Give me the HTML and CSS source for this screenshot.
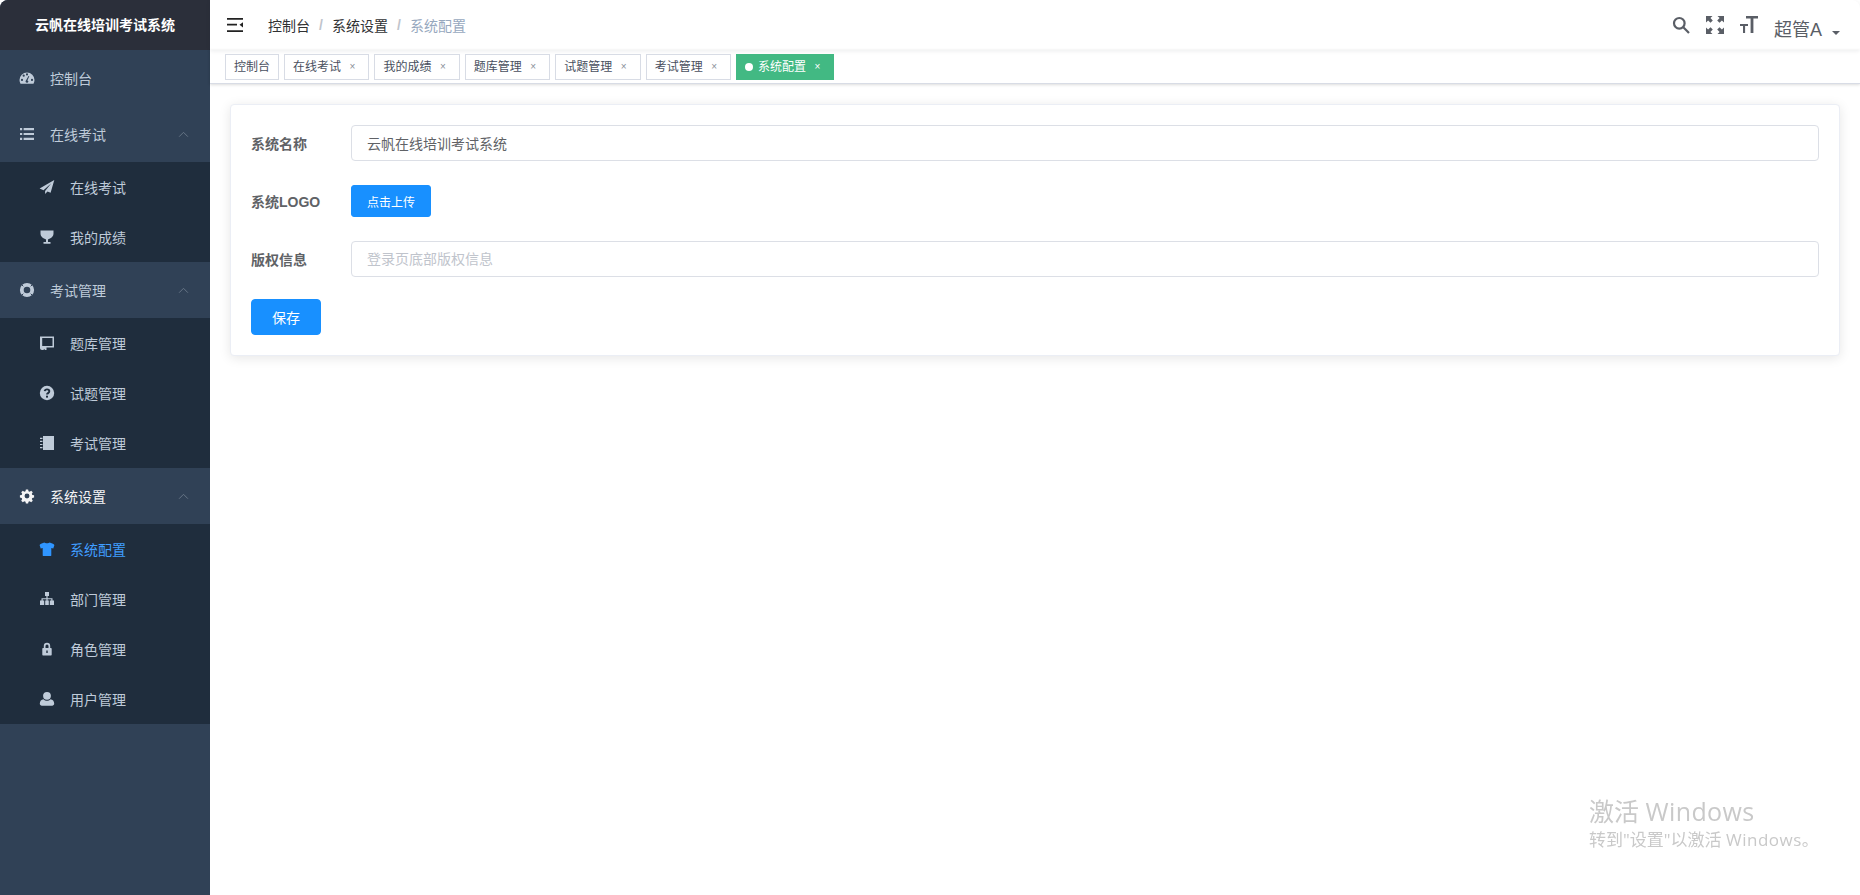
FILE: index.html
```html
<!DOCTYPE html>
<html lang="zh">
<head>
<meta charset="utf-8">
<title>系统配置</title>
<link rel="stylesheet" href="styles.css">
</head>
<body>
<div class="app">
  <aside class="sidebar">
    <div class="logo">云帆在线培训考试系统</div>
    <nav>
      <a class="group"><svg class="ico" viewBox="0 0 16 16"><path fill-rule="evenodd" d="M8 2.500A7.500 7.500 0 0 0 .5 10c0 1.200.3 2.400.9 3.400.1.200.3.300.5.300h12.200c.2 0 .4-.1.500-.3.600-1 .9-2.200.9-3.400A7.500 7.500 0 0 0 8 2.500zM3 11a1.100 1.100 0 1 1 0-2.200A1.100 1.100 0 0 1 3 11zM4.700 6.800a1.100 1.100 0 1 1 0-2.200 1.100 1.100 0 0 1 0 2.200zM8 5.500a1.100 1.100 0 1 1 0-2.200 1.100 1.100 0 0 1 0 2.200zM13 11a1.100 1.100 0 1 1 0-2.200 1.100 1.100 0 0 1 0 2.200zM9.400 11.800a1.500 1.500 0 0 1-2.900-.5l3-5.400.8.400-1.900 4.100a1.500 1.500 0 0 1 1 1.400z"/></svg><span>控制台</span></a>

      <a class="group"><svg class="ico" viewBox="0 0 16 16"><path d="M1 2h2.200v2.200H1zM1 6.900h2.200v2.200H1zM1 11.800h2.200V14H1zM4.600 2H15v2.200H4.600zM4.600 6.900H15v2.200H4.600zM4.600 11.800H15V14H4.600z"/></svg><span>在线考试</span><svg class="arrow" viewBox="0 0 12 8"><path d="M1 6.500l5-5 5 5"/></svg></a>
      <div class="sub">
        <a class="item"><svg class="ico" viewBox="0 0 16 16"><path d="M15.300 1L.6 9.500l3.900 1.700 7.800-6.900-6.200 7.700V15l2.400-2.600 3.100 1.300z"/></svg><span>在线考试</span></a>
        <a class="item"><svg class="ico" viewBox="0 0 16 16"><path d="M1.500 1.500h13v3c0 2.800-2.200 5-5 5.500-.3.300-.5.700-.5 1.200V13h2.500v1.800H4.500V13H7v-1.800c0-.5-.2-.9-.5-1.200C3.700 9.500 1.500 7.300 1.500 4.500z"/></svg><span>我的成绩</span></a>
      </div>

      <a class="group"><svg class="ico" viewBox="0 0 16 16"><circle class="ring" cx="8" cy="8" r="5.200"/><path class="cut" d="M2.600 2.600l1.700 1.700M13.400 2.600l-1.700 1.700M2.600 13.400l1.700-1.700M13.400 13.400l-1.700-1.700"/></svg><span>考试管理</span><svg class="arrow" viewBox="0 0 12 8"><path d="M1 6.500l5-5 5 5"/></svg></a>
      <div class="sub">
        <a class="item"><svg class="ico" viewBox="0 0 16 16"><path fill-rule="evenodd" d="M1 1.500h14v11H7.500V15H6l-.8-1-.8 1H3c-1.100 0-2-.9-2-2zM3.200 3v8h10.300V3z"/></svg><span>题库管理</span></a>
        <a class="item"><svg class="ico" viewBox="0 0 16 16"><circle cx="8" cy="8" r="7.200"/><path class="mark" d="M5.700 6.200C5.900 5 6.800 4.400 8 4.400c1.300 0 2.300.8 2.300 1.900 0 1.900-2.300 1.700-2.300 3.300"/><rect class="dot" x="7" y="10.700" width="2" height="1.900"/></svg><span>试题管理</span></a>
        <a class="item"><svg class="ico" viewBox="0 0 16 16"><path d="M4 1h11v14H4zM1 2.800h2.500V4H1zM1 5.800h2.500V7H1zM1 8.900h2.500v1.200H1zM1 12h2.500v1.200H1z"/></svg><span>考试管理</span></a>
      </div>

      <a class="group on"><svg class="ico" viewBox="0 0 16 16"><path fill-rule="evenodd" d="M6.700 1h2.600l.4 2 1.300.6 1.800-1.100 1.800 1.800-1.100 1.800.6 1.300 2 .4v2.600l-2 .4-.6 1.300 1.100 1.800-1.800 1.800-1.800-1.100-1.300.6-.4 2H6.700l-.4-2-1.300-.6-1.800 1.100-1.800-1.800 1.100-1.800-.6-1.300-2-.4V7.800l2-.4.6-1.300-1.100-1.800 1.800-1.800 1.800 1.100 1.300-.6zM8 5.700a2.800 2.800 0 1 0 0 5.600 2.800 2.800 0 0 0 0-5.600z" transform="translate(1 .5) scale(.875)"/></svg><span>系统设置</span><svg class="arrow" viewBox="0 0 12 8"><path d="M1 6.500l5-5 5 5"/></svg></a>
      <div class="sub">
        <a class="item active"><svg class="ico" viewBox="0 0 16 16"><path d="M5.300 1.500C6 2.600 10 2.600 10.700 1.500c1.700.4 3.600 1.300 4.700 2.400l-1.100 3.600-2-.6v7.600c0 .3-.2.500-.5.500H4.200c-.3 0-.5-.2-.5-.5V6.900l-2 .6L.6 3.900c1.100-1.100 3-2 4.700-2.400z"/></svg><span>系统配置</span></a>
        <a class="item"><svg class="ico" viewBox="0 0 16 16"><path d="M6 1h4v4H8.600v2.200h4.900v2.300H15V14h-4.200V9.500h1.500V8.300H8.600v1.200h1.200V14H6.200V9.500h1.200V8.300H3.700v1.200h1.500V14H1V9.500h1.500V7.200h4.900V5H6z"/></svg><span>部门管理</span></a>
        <a class="item"><svg class="ico" viewBox="0 0 16 16"><path fill-rule="evenodd" d="M4.800 7V5a3.200 3.200 0 0 1 6.400 0v2h.8c.4 0 .7.300.7.700v6c0 .4-.3.700-.7.700H4c-.4 0-.7-.3-.7-.7v-6c0-.4.300-.7.700-.7zM6.500 7h3V5a1.500 1.500 0 0 0-3 0zM7.300 9.500v2.400h1.400V9.500z"/></svg><span>角色管理</span></a>
        <a class="item"><svg class="ico" viewBox="0 0 16 16"><circle cx="8" cy="4.800" r="3.900"/><path d="M4.500 8.200C5.500 9.300 6.700 9.800 8 9.800s2.500-.5 3.500-1.600c2.200.2 3.700 1.800 3.700 4.400 0 1.300-.9 2.200-2 2.200H2.800c-1.100 0-2-.9-2-2.200 0-2.600 1.500-4.200 3.700-4.400z"/></svg><span>用户管理</span></a>
      </div>
    </nav>
  </aside>

  <main class="main">
    <header class="navbar">
      <svg class="hamburger" viewBox="0 0 16 14"><path d="M0 0h16v1.800H0zM0 5.800h10v1.800H0zM0 12.200h16V14H0zM16 4.200v5.200l-3.500-2.600z"/></svg>
      <div class="crumbs">
        <span>控制台</span><i>/</i><span>系统设置</span><i>/</i><span class="cur">系统配置</span>
      </div>
      <div class="right">
        <svg class="tool" viewBox="0 0 18 18"><circle cx="7.300" cy="7.300" r="5.300"/><path d="M11.300 11.300l5.700 5.700"/></svg>
        <svg class="tool solid" viewBox="0 0 18 18"><path d="M0 0h6.500L4.400 2.100l2.400 2.400-2.300 2.300-2.400-2.400L0 6.500zM18 0v6.500l-2.100-2.100-2.400 2.400-2.300-2.300 2.400-2.400L11.500 0zM0 18v-6.500l2.100 2.100 2.400-2.400 2.300 2.300-2.400 2.400L6.500 18zM18 18h-6.500l2.100-2.100-2.400-2.400 2.300-2.300 2.400 2.400 2.100-2.100z"/></svg>
        <svg class="tool solid" viewBox="0 0 18 18"><path d="M6 0h12v2.400h-4.600V17h-2.800V2.400H6zM0 8h8v2H5.100v7H3v-7H0z"/></svg>
        <div class="user">超管A</div>
        <span class="caret"></span>
      </div>
    </header>

    <div class="tags">
      <a class="tag">控制台</a>
      <a class="tag">在线考试<b>×</b></a>
      <a class="tag">我的成绩<b>×</b></a>
      <a class="tag">题库管理<b>×</b></a>
      <a class="tag">试题管理<b>×</b></a>
      <a class="tag">考试管理<b>×</b></a>
      <a class="tag current"><em></em>系统配置<b>×</b></a>
    </div>

    <section class="content">
      <form class="card">
        <div class="row">
          <label>系统名称</label>
          <input class="field" type="text" value="云帆在线培训考试系统">
        </div>
        <div class="row">
          <label>系统LOGO</label>
          <button class="btn small" type="button">点击上传</button>
        </div>
        <div class="row">
          <label>版权信息</label>
          <input class="field" type="text" placeholder="登录页底部版权信息">
        </div>
        <button class="btn save" type="button">保存</button>
      </form>
    </section>
  </main>
</div>
<div class="watermark">
  <div class="wm1">激活 <span class="latin">Windows</span></div>
  <div class="wm2">转到"设置"以激活 <span class="latin">Windows</span>。</div>
</div>
</body>
</html>
```

FILE: styles.css
```css
* { box-sizing: border-box; }
html, body { height: 100%; margin: 0; overflow: hidden; background: #fff; }
body { font-family: "Liberation Sans", "Noto Sans CJK SC", sans-serif; font-size: 14px; color: #303133; }
.app { display: flex; height: 100%; }

.sidebar { width: 210px; flex: none; background: #304156; border-top-left-radius: 8px; overflow: hidden; color: #bfcbd9; }
.logo { height: 50px; background: #2b2f3a; color: #fff; font-weight: 700; font-size: 14px; line-height: 50px; text-align: center; }
.group, .item { display: flex; align-items: center; color: #bfcbd9; fill: #bfcbd9; }
.group { height: 56px; padding-left: 19px; }
.item { height: 50px; padding-left: 39px; }
.sub { background: #1f2d3d; }
.ico { width: 16px; height: 16px; flex: none; margin-right: 15px; }
.ico .ring { fill: none; stroke: #bfcbd9; stroke-width: 3.800; }
.ico .cut { fill: none; stroke: #304156; stroke-width: 1; }
.ico .mark { fill: none; stroke: #1f2d3d; stroke-width: 1.900; }
.ico .dot { fill: #1f2d3d; }
.arrow { width: 11px; height: 7px; margin-left: auto; margin-right: 21px; fill: none; stroke: #6d7b8c; stroke-width: 1; }
.group.on { color: #f4f4f5; fill: #f4f4f5; }
.group.on .ring { stroke: #f4f4f5; }
.item.active { color: #409eff; fill: #2f95ff; }

.main { flex: 1; min-width: 0; display: flex; flex-direction: column; }
.navbar { height: 50px; flex: none; display: flex; align-items: center; padding-left: 17px; border-top-right-radius: 8px; box-shadow: 0 1px 4px rgba(0,21,41,.08); position: relative; }
.hamburger { width: 16px; height: 14px; fill: #222; margin-right: 25px; }
.crumbs { display: flex; align-items: center; color: #303133; }
.crumbs i { font-style: normal; color: #c0c4cc; font-weight: 700; margin: 0 9px; width: 4px; text-align: center; }
.crumbs .cur { color: #97a8be; }
.right { margin-left: auto; display: flex; align-items: center; color: #5a5e66; }
.tool { width: 18px; height: 18px; margin-right: 16px; fill: none; stroke: #5a5e66; stroke-width: 2.200; }
.tool.solid { fill: #5a5e66; stroke: none; }
.user { font-size: 18px; line-height: 24px; margin-top: 10px; }
.caret { width: 0; height: 0; border: 4px solid transparent; border-top: 4px solid #5a5e66; border-bottom: 0; margin: 16px 20px 0 10px; }

.tags { height: 34px; flex: none; display: flex; align-items: center; padding-left: 15px; gap: 5px; border-bottom: 1px solid #d8dce5; box-shadow: 0 1px 3px rgba(0,0,0,.12), 0 0 3px rgba(0,0,0,.04); position: relative; }
.tag { height: 26px; line-height: 24px; border: 1px solid #d8dce5; padding: 0 8px; font-size: 12px; color: #495060; display: flex; align-items: center; white-space: nowrap; }
.tag b { width: 16px; margin-left: 3.400px; text-align: center; font-weight: 400; font-size: 10px; color: #8a8f99; }
.tag.current { background: #42b983; border-color: #42b983; color: #fff; }
.tag.current b { color: #fff; }
.tag em { width: 8px; height: 8px; border-radius: 50%; background: #fff; margin-right: 5px; }

.content { flex: 1; padding: 20px; }
.card { background: #fff; border: 1px solid #ebeef5; border-radius: 4px; box-shadow: 0 2px 12px rgba(0,0,0,.1); padding: 20px; }
.row { display: flex; align-items: center; height: 36px; margin-bottom: 22px; }
.row label { width: 100px; flex: none; font-weight: 700; color: #606266; font-size: 14px; }
.field { flex: 1; height: 36px; border: 1px solid #dcdfe6; border-radius: 4px; padding: 0 15px; font: inherit; color: #606266; outline: none; }
.field::placeholder { color: #c0c4cc; opacity: 1; }
.btn { border: 1px solid #1890ff; background: #1890ff; color: #fff; font-family: inherit; padding: 0; display: block; }
.small { width: 80px; height: 32px; border-radius: 3px; font-size: 12px; }
.save { width: 70px; height: 36px; border-radius: 4px; font-size: 14px; }

.watermark { position: fixed; left: 1589px; top: 793px; color: #c9c9c9; font-family: "Open Sans", "Noto Sans CJK SC", sans-serif; font-weight: 400; white-space: nowrap; }
.wm1 { font-size: 25px; line-height: 36px; }
.wm1 .latin { letter-spacing: .4px; }
.wm2 { font-size: 17px; line-height: 22px; }
.wm2 .latin { letter-spacing: .5px; }
```
